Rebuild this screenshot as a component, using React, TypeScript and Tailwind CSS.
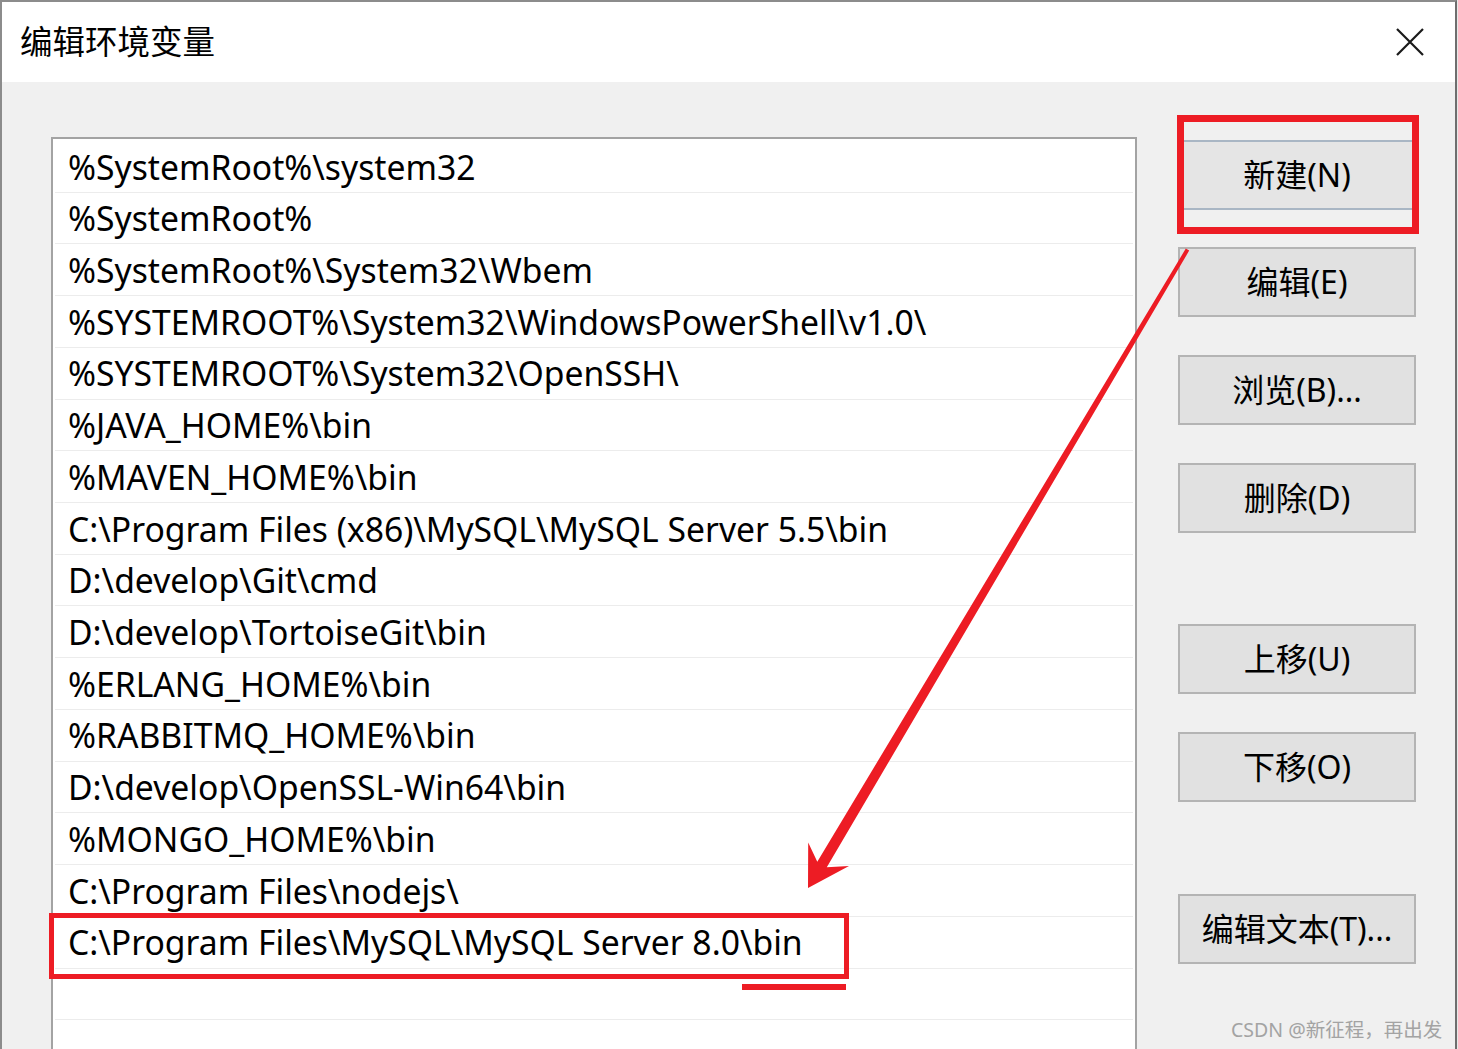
import React from "react";

const items = [
  "%SystemRoot%\\system32",
  "%SystemRoot%",
  "%SystemRoot%\\System32\\Wbem",
  "%SYSTEMROOT%\\System32\\WindowsPowerShell\\v1.0\\",
  "%SYSTEMROOT%\\System32\\OpenSSH\\",
  "%JAVA_HOME%\\bin",
  "%MAVEN_HOME%\\bin",
  "C:\\Program Files (x86)\\MySQL\\MySQL Server 5.5\\bin",
  "D:\\develop\\Git\\cmd",
  "D:\\develop\\TortoiseGit\\bin",
  "%ERLANG_HOME%\\bin",
  "%RABBITMQ_HOME%\\bin",
  "D:\\develop\\OpenSSL-Win64\\bin",
  "%MONGO_HOME%\\bin",
  "C:\\Program Files\\nodejs\\",
  "C:\\Program Files\\MySQL\\MySQL Server 8.0\\bin",
  "",
  "",
];

function Btn({ label, mt, def }: { label: string; mt: string; def?: boolean }) {
  return (
    <div
      className={`${mt} h-[70px] w-[238px] flex items-center justify-center border-2 ${
        def ? "border-[#a9b6c4] bg-[#e5e5e5]" : "border-[#b4b4b4] bg-[#e1e1e1]"
      } text-[32px] text-black font-['Noto_Sans','Noto_Sans_CJK_SC',sans-serif] leading-none`}
    >
      <span className="pb-[1px]">{label}</span>
    </div>
  );
}

export default function App() {
  return (
    <div className="relative w-[1458px] h-[1049px] overflow-hidden bg-[#e8e8e8]">
      <div className="w-[1457px] h-[1049px] border-t-2 border-l-2 border-r-2 border-t-[#8c8c8c] border-l-[#8c8c8c] border-r-[#6e6e6e] flex flex-col">
        {/* Title bar */}
        <div className="h-[80px] bg-white flex items-center justify-between pl-[18px] pr-[30px] shrink-0">
          <span className="text-[32.5px] text-black font-['Noto_Sans_CJK_SC',sans-serif] leading-none pb-[4px]">
            编辑环境变量
          </span>
          <svg width="30" height="30" viewBox="0 0 30 30">
            <path d="M2 2 L28 28 M28 2 L2 28" stroke="#1a1a1a" strokeWidth="2.2" />
          </svg>
        </div>
        {/* Body */}
        <div className="flex-1 bg-[#f0f0f0] flex pl-[49px] pt-[55px] min-h-0">
          <div className="w-[1086px] bg-white border-2 border-b-0 border-[#a3a3a3] pt-[2px] overflow-hidden">
            {items.map((t, i) => (
              <div
                key={i}
                className="h-[51.73px] mx-[2px] border-b border-[#ececec] flex items-center pl-[13px] pt-[2px] text-[33.7px] text-black font-['Noto_Sans',sans-serif] leading-none whitespace-nowrap"
              >
                {t}
              </div>
            ))}
          </div>
          <div className="ml-[41px] flex flex-col pt-[3px]">
            <Btn label="新建(N)" mt="mt-0" def />
            <Btn label="编辑(E)" mt="mt-[37px]" />
            <Btn label="浏览(B)..." mt="mt-[38px]" />
            <Btn label="删除(D)" mt="mt-[38px]" />
            <Btn label="上移(U)" mt="mt-[91px]" />
            <Btn label="下移(O)" mt="mt-[38px]" />
            <Btn label="编辑文本(T)..." mt="mt-[92px]" />
          </div>
        </div>
      </div>

      {/* Annotations */}
      <div className="absolute left-[1177px] top-[115px] w-[242px] h-[119px] border-[7px] border-[#ed1c24]" />
      <div className="absolute left-[49px] top-[913px] w-[800px] h-[66px] border-[5px] border-[#ed1c24]" />
      <div className="absolute left-[742px] top-[984px] w-[104px] h-[6px] bg-[#ed1c24]" />
      <svg className="absolute left-0 top-0" width="1458" height="1049" viewBox="0 0 1458 1049">
        <polygon
          points="1189.2,250.6 826.8,867.3 849,866 808,888 808.2,842.4 817.3,861.7 1185.8,248.6"
          fill="#ed1c24"
        />
      </svg>
      <div className="absolute left-[1231px] top-[1020px] text-[19.5px] leading-none text-[#a3a3a3] font-['Noto_Sans','Noto_Sans_CJK_SC',sans-serif] whitespace-nowrap">
        CSDN @新征程，再出发
      </div>
    </div>
  );
}
